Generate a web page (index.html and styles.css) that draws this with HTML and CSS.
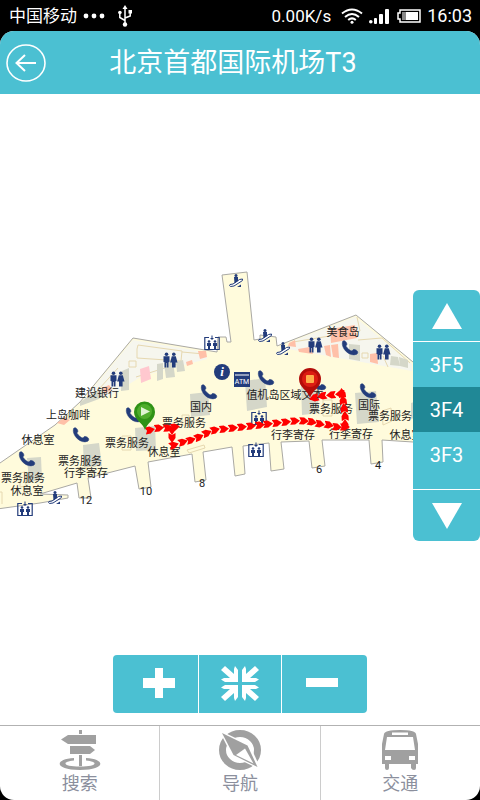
FILE: index.html
```html
<!DOCTYPE html>
<html lang="zh-CN">
<head>
  <meta charset="UTF-8">
  <meta name="viewport" content="width=device-width, initial-scale=1.0">
  <title>北京首都国际机场T3</title>
  <link rel="stylesheet" href="styles.css">
</head>
<body>
  <div class="status-bar">
    <span class="carrier">中国移动</span>
    <svg class="dots" width="22" height="6" viewBox="0 0 22 6" fill="#fff">
      <circle cx="3" cy="3" r="2.4"/><circle cx="11" cy="3" r="2.4"/><circle cx="19" cy="3" r="2.4"/>
    </svg>
    <svg class="usb" width="14" height="22" viewBox="0 0 14 22" fill="none" stroke="#fff" stroke-width="1.5">
      <path d="M7 19V3M7 15.500L1.800 12.500V8M7 13L12.200 11V7"/>
      <path d="M4.500 4L7 0L9.500 4Z" fill="#fff" stroke="none"/>
      <circle cx="7" cy="19.500" r="2.200" fill="#fff" stroke="none"/>
      <circle cx="1.900" cy="7.500" r="1.800" fill="#fff" stroke="none"/>
      <rect x="10.500" y="5" width="3.500" height="3.500" fill="#fff" stroke="none"/>
    </svg>
    <span class="speed">0.00K/s</span>
    <svg class="wifi" width="22" height="16" viewBox="0 0 22 16" fill="none" stroke="#fff" stroke-width="2">
      <path d="M1 5.500Q11-2.500 21 5.500M4 9Q11 3 18 9M7.200 12Q11 8.800 14.800 12"/>
      <circle cx="11" cy="14.300" r="1.500" fill="#fff" stroke="none"/>
    </svg>
    <svg class="signal" width="20" height="16" viewBox="0 0 20 16" fill="#fff">
      <circle cx="1.800" cy="13.800" r="1.800"/>
      <rect x="5" y="10" width="3" height="6" rx="1"/><rect x="10" y="6" width="4" height="10" rx="1"/><rect x="16" y="1" width="4" height="15" rx="1"/>
    </svg>
    <svg class="battery" width="24" height="14" viewBox="0 0 24 14">
      <path d="M3 1H23V13H3V10H1V4H3Z" fill="#000" stroke="#fff" stroke-width="1.500"/>
      <rect x="5" y="3" width="16" height="8" fill="#888"/>
      <rect x="9" y="3" width="12" height="8" fill="#fff"/>
    </svg>
    <span class="clock">16:03</span>
  </div>

  <div class="app">
    <header class="header">
      <button type="button" class="back" aria-label="返回">
        <svg width="40" height="38" viewBox="0 0 40 38" fill="none" stroke="#fff" stroke-width="1.600">
          <ellipse cx="20" cy="19" rx="19" ry="18"/>
          <path d="M30 19H10M19 11L10.500 19L19 27" stroke-width="2"/>
        </svg>
      </button>
      <h1>北京首都国际机场T3</h1>
    </header>

    <main class="map">
      <svg class="map-canvas" viewBox="0 94 480 631" preserveAspectRatio="xMidYMid slice">
        <defs>
          <g id="phone">
            <path d="M-7.500-6.500C-5.500-9-2.500-5-3.200-3.200L-4.200-2C-2.500 .500 0 2.800 2 3L3.300 1.500C6 1 9.500 4 6.800 6.200C0 9.500-9.500 .500-7.500-6.500Z" stroke="#233c7b" stroke-width=".5"/>
          </g>
          <g id="person">
            <circle cy="-5.700" r="1.800"/>
            <path d="M-3-3.700H3V2L2 2.300V7.500H.300V3H-.300V7.500H-2V2.300L-3 2Z"/>
          </g>
          <g id="woman">
            <circle cy="-5.700" r="1.800"/>
            <path d="M-2-3.700H2L3.700 2.500H1.800V7.500H-1.800V2.500H-3.700Z"/>
          </g>
          <g id="toilet">
            <use href="#person" x="-3.500"/>
            <use href="#woman" x="3.800"/>
          </g>
          <g id="lift">
            <path d="M-3-5.500H-7.200V6.500H7.200V-5.500H3" fill="none" stroke="#233c7b" stroke-width="1.200"/>
            <path d="M-.500-7.500H.500V-5H2L0-3L-2-5H-.500Z"/>
            <circle cx="-3" cy="-1.500" r="1.300"/><circle cx="3" cy="-1.500" r="1.300"/>
            <path d="M-5 0H-1V3H-2V6H-4V3H-5ZM1 0H5V3H4V6H2V3H1Z"/>
          </g>
          <g id="escalator">
            <path d="M-6 3.500L-3 3L3.500-1.500L6.500-2Q7 0 5 .500L-2 5L-5.500 5.500Q-7 5-6 3.500Z" fill="#fff" stroke="#233c7b"/>
            <circle cy="-5.500" r="1.500"/>
            <path d="M-2-4H2V0L-1.500 2.500ZM1 6L5 3.500V6Z"/>
          </g>
          <marker id="arrow" viewBox="-5 -4 10 8" markerWidth="10" markerHeight="8" markerUnits="userSpaceOnUse" orient="auto">
            <path d="M-5-3.500H0L5 0L0 3.500H-5L-3 0Z" fill="#f00"/>
          </marker>
        </defs>

        <!-- terminal floor -->
        <path class="floor" d="M-10 470L0 463L55 425L80 402L133 338L217 352L218 337L226 337L227 342L231 342L222 275L247 272L254 340L260 339V335L276 337L277 346L356 315L413 362L490 420V446L413 442L382 440L383 462L371 464L369 440L322 440L325 466L312 468L309 441L281 442L284 469L271 471L269 443L243 446L245 474L235 476L232 447L203 452L206 480L195 482L192 454L148 462L151 487L139 489L135 466L88 478L91 498L79 498L77 483L40 494L68 495V498L40 503L-10 510Z"/>

        <!-- shops -->
        <g class="block-light">
          <path d="M133 340L205 352L207 359L142 376L112 395L84 399Z"/>
          <path d="M355 317L412 364V371L288 349L293 341Z"/>
        </g>
        <g class="wall">
          <path d="M137 349L138 345L182 351L181 361L137 358ZM129 361H136V367H129ZM99 389L118 368M136 377L181 363M182 352L204 354"/>
          <path d="M293 342L360 331L357 317M358 340L382 338L410 363M362 353H368V358H362ZM383 356L388 367"/>
          <path d="M122 436H131V450H122ZM182 415H189V425H182ZM77 468L96 466M187 450L204 445L205 448L189 453ZM323 400H332V416H323ZM382 411L391 408L392 421L383 425ZM343 437L359 438M20 473L25 472L26 486L20 487ZM0 492L2 492V504"/>
        </g>
        <g class="block-grey">
          <path d="M122 371L129 368V390L121 391ZM157 364L163 363V379L157 381ZM164 363L173 361L175 377L166 378ZM176 362L183 360L185 371L177 372ZM80 402L98 390L104 392L99 399L80 406Z"/>
          <path d="M83 445L99 443L102 466L84 467ZM27 458L41 457L42 480L29 482ZM135 428L155 426L156 450L136 451ZM190 394L208 392L210 415L191 417ZM245 381L265 378L267 407L247 411ZM301 384L317 382L319 413L302 415ZM355 393L376 391L379 422L357 424ZM411 403L414 402V418L411 419Z"/>
          <path d="M349 344L360 345V361L349 359ZM391 356L398 357L400 366L390 365ZM399 357L408 360L408 368L400 366Z"/>
        </g>
        <path class="block-pink" d="M140 369L149 366L151 379L141 383Z"/>
        <g class="block-red">
          <path d="M186 362L192 360L193 364L187 366ZM198 351L206 351L207 357L200 359Z"/>
          <path d="M57 423L65 417L70 420L64 425ZM102 388L109 385L112 389L105 394Z"/>
          <path d="M289 343L295 340L296 347L288 346ZM298 349L310 347L313 354L299 352ZM324 346L330 345L331 357L326 355ZM331 345L338 344L339 358L333 357ZM330 329L355 325L357 338L331 343ZM370 354L377 353L378 364L370 362Z"/>
        </g>

        <!-- facilities -->
        <g class="facility">
          <use href="#phone" x="27" y="459"/>
          <use href="#phone" x="81" y="435"/>
          <use href="#phone" x="134" y="415"/>
          <use href="#phone" x="209" y="392"/>
          <use href="#phone" x="266" y="378"/>
          <use href="#phone" x="318" y="383"/>
          <use href="#phone" x="350" y="348"/>
          <use href="#phone" x="368" y="391"/>
          <use href="#toilet" x="117" y="379"/>
          <use href="#toilet" x="170" y="360"/>
          <use href="#toilet" x="315" y="345"/>
          <use href="#toilet" x="383" y="352"/>
          <use href="#lift" x="212" y="343"/>
          <use href="#lift" x="259" y="418"/>
          <use href="#lift" x="256" y="450"/>
          <use href="#lift" x="25" y="509"/>
          <use href="#escalator" x="236" y="281"/>
          <use href="#escalator" x="265" y="336"/>
          <use href="#escalator" x="283" y="349"/>
          <use href="#escalator" x="55" y="498"/>
          <circle cx="222" cy="372" r="8"/>
          <rect x="234" y="372" width="16" height="15"/>
        </g>
        <path d="M235 375H249" stroke="#fff"/>
        <text class="info" x="222" y="376">i</text>
        <text class="atm" x="242" y="384">ATM</text>

        <g class="labels">
          <text x="343" y="336">美食岛</text>
          <text x="97" y="397">建设银行</text>
          <text x="68" y="419">上岛咖啡</text>
          <text x="38" y="444">休息室</text>
          <text x="80" y="465">票务服务</text>
          <text x="86" y="477">行李寄存</text>
          <text x="23" y="482">票务服务</text>
          <text x="27" y="495">休息室</text>
          <text x="127" y="447">票务服务</text>
          <text x="184" y="427">票务服务</text>
          <text x="201" y="411">国内</text>
          <text x="164" y="456">休息室</text>
          <text x="285" y="399">值机岛区域文本</text>
          <text x="331" y="413">票务服务</text>
          <text x="369" y="409">国际</text>
          <text x="390" y="420">票务服务</text>
          <text x="293" y="439">行李寄存</text>
          <text x="351" y="438">行李寄存</text>
          <text x="406" y="439">休息室</text>
          <text x="86" y="504">12</text>
          <text x="146" y="495">10</text>
          <text x="202" y="487">8</text>
          <text x="319" y="473">6</text>
          <text x="378" y="469">4</text>
        </g>

        <!-- route -->
        <g class="route">
          <polyline points="150,430 159,428 168,428 175,427"/>
          <polyline points="172,430 172,438"/>
          <polyline points="174,445 183,442 191,440 199,437 207,433 215,430 224,429 233,428 242,427 251,426 260,425 268,424 277,423 286,422 295,421 304,421 312,422 320,424 329,425 337,427 345,427"/>
          <polyline points="345,424 345,416 344,408 343,400 342,393"/>
          <polyline points="340,394 331,395 322,396 314,398"/>
        </g>

        <path d="M145 430C143 423 134 420 134 412A10.500 10.500 0 0 1 155 412C155 420 147 423 145 430Z" fill="#2f9216"/>
        <circle cx="144.500" cy="411.500" r="7.500" fill="#4fad2c"/>
        <path d="M141 407V416L150 411.500Z" fill="#dff3d2"/>
        <path d="M310 398C308 390 299 388 299 379A11 11 0 0 1 321 379C321 388 312 390 310 398Z" fill="#b30d09"/>
        <circle cx="310" cy="379" r="8" fill="#dc1d12"/>
        <rect x="306" y="375" width="8" height="8" rx="1" fill="#ffad4b"/>
      </svg>

      <div class="floors">
        <button type="button" class="floor-arrow" aria-label="上一层">
          <svg width="30" height="26" viewBox="0 0 30 26"><path d="M15 0L30 26H0Z" fill="#fff"/></svg>
        </button>
        <div class="floor-list">
          <button type="button" class="floor-item">3F5</button>
          <button type="button" class="floor-item active">3F4</button>
          <button type="button" class="floor-item">3F3</button>
        </div>
        <button type="button" class="floor-arrow" aria-label="下一层">
          <svg width="30" height="26" viewBox="0 0 30 26"><path d="M15 26L30 0H0Z" fill="#fff"/></svg>
        </button>
      </div>

      <div class="zoom">
        <button type="button" class="zoom-in" aria-label="放大">
          <svg width="32" height="30" viewBox="0 0 32 30"><path d="M12 0H20V10H32V20H20V30H12V20H0V10H12Z" fill="#fff"/></svg>
        </button>
        <button type="button" class="zoom-fit" aria-label="复位">
          <svg width="38" height="35" viewBox="0 0 38 35" fill="#fff">
            <path id="corner" d="M0 4L4 0L13 8V3L14 0L17 4V16H4L0 13.500L3 12H9Z"/>
            <use href="#corner" transform="matrix(-1 0 0 1 38 0)"/>
            <use href="#corner" transform="matrix(1 0 0 -1 0 35)"/>
            <use href="#corner" transform="matrix(-1 0 0 -1 38 35)"/>
          </svg>
        </button>
        <button type="button" class="zoom-out" aria-label="缩小">
          <svg width="32" height="30" viewBox="0 0 32 30"><path d="M0 10H32V19H0Z" fill="#fff"/></svg>
        </button>
      </div>
    </main>

    <nav class="tabs">
      <a href="#search" class="tab">
        <svg width="42" height="40" viewBox="0 0 42 40" fill="#a0a0a0">
          <path d="M20 0H23V4H20ZM9 5H37V14H9L2 9.500ZM11 16H31L36 20L31 24H11ZM20 25H23V36H20Z"/>
          <path d="M15 28C-5 29-5 40 21 40S47 29 27 28V30.500C41 32 37 36.500 21 36.500S1 32 15 30.500Z"/>
        </svg>
        <span>搜索</span>
      </a>
      <a href="#navigate" class="tab">
        <svg width="42" height="40" viewBox="0 0 42 40">
          <ellipse cx="21" cy="20" rx="17.500" ry="16.500" fill="none" stroke="#a0a0a0" stroke-width="7"/>
          <path d="M0 0L31 15L42 40L13 26Z" fill="#fff"/>
          <path d="M3 3L28.500 15.500L38.500 37L14.500 25Z" fill="#a0a0a0"/>
          <path d="M26 18.500L34.500 33.500L17 25Z" fill="#fff"/>
        </svg>
        <span>导航</span>
      </a>
      <a href="#traffic" class="tab">
        <svg width="42" height="40" viewBox="0 0 42 40">
          <path d="M3 34V14L5 4Q6 0 21 0T37 4L39 14V34H37V38Q37 40 35 40T32 38V34H10V38Q10 40 8 40T6 38V34Z" fill="#a0a0a0"/>
          <path d="M8 7H34L36 20H6ZM13 2.500H29V5H13ZM6 26H12V30H6ZM30 26H36V30H30Z" fill="#fff"/>
        </svg>
        <span>交通</span>
      </a>
    </nav>
  </div>
</body>
</html>
```

FILE: styles.css
```css
* {
  box-sizing: border-box;
}

body {
  display: flex;
  flex-direction: column;
  height: 100vh;
  margin: 0;
  background: #000;
  font-family: Roboto, "Noto Sans CJK SC", sans-serif;
}

button {
  display: flex;
  align-items: center;
  justify-content: center;
  padding: 0;
  border: none;
  background: none;
  color: inherit;
  font: inherit;
  cursor: pointer;
}

svg {
  display: block;
}

.status-bar {
  display: flex;
  align-items: center;
  height: 31px;
  padding: 1px 8px 0 9px;
  color: #fff;
  font-size: 17px;
  line-height: 30px;
}

.dots {
  margin-left: 6px;
}

.usb {
  margin-left: 13px;
}

.speed {
  margin-left: auto;
}

.wifi {
  margin-left: 10px;
}

.signal {
  margin-left: 6px;
}

.battery {
  margin: 0 6px 0 8px;
}

.clock {
  font-size: 18px;
}

.app {
  flex: 1;
  display: flex;
  flex-direction: column;
  min-height: 0;
  background: #fff;
  border-radius: 14px;
  overflow: hidden;
}

.header {
  display: flex;
  align-items: center;
  height: 63px;
  padding: 0 60px 0 6px;
  background: #4bc0d2;
  color: #fff;
}

.header h1 {
  flex: 1;
  margin: 0;
  font-size: 27px;
  font-weight: 400;
  line-height: 36px;
  text-align: center;
}

.map {
  position: relative;
  flex: 1;
  min-height: 0;
}

.map-canvas {
  width: 100%;
  height: 100%;
}

.floor {
  fill: #fffbdc;
  stroke: #aaa9a4;
  stroke-width: 1;
}

.block-light {
  fill: #f6f6ee;
}

.block-grey {
  fill: #d5d7c9;
}

.block-red {
  fill: #ffc0a8;
}

.block-pink {
  fill: #ffc8cf;
}

.wall {
  fill: none;
  stroke: #e6d8b0;
  stroke-width: 1;
}

.facility {
  fill: #233c7b;
}

.labels {
  fill: #222;
  font-size: 11px;
  text-anchor: middle;
}

.info {
  fill: #fff;
  font: italic bold 13px "Liberation Serif", serif;
  text-anchor: middle;
}

.atm {
  fill: #fff;
  font-size: 7px;
  text-anchor: middle;
}

.route polyline {
  fill: none;
  marker-start: url(#arrow);
  marker-mid: url(#arrow);
  marker-end: url(#arrow);
}

.floors {
  position: absolute;
  top: 196px;
  right: 0;
  width: 67px;
  background: #4bc0d2;
  border-radius: 6px;
  color: #fff;
  font-size: 20px;
  overflow: hidden;
}

.floor-arrow {
  width: 100%;
  height: 51px;
}

.floor-list {
  padding-bottom: 12px;
  border-top: 1px solid #fff;
  border-bottom: 1px solid #fff;
}

.floor-item {
  width: 100%;
  height: 45px;
}

.floor-item.active {
  background: #208896;
}

.zoom {
  position: absolute;
  right: 0;
  bottom: 12px;
  left: 0;
  display: flex;
  gap: 1px;
  width: max-content;
  margin: 0 auto;
  border-radius: 4px;
  overflow: hidden;
}

.zoom button {
  width: 85px;
  height: 58px;
  padding-bottom: 2px;
  background: #4bc0d2;
}

.zoom .zoom-in {
  padding-left: 6px;
}

.zoom .zoom-fit {
  width: 82px;
}

.zoom .zoom-out {
  padding-right: 6px;
}

.tabs {
  display: flex;
  height: 75px;
  border-top: 1px solid #b2b2b2;
}

.tab {
  flex: 1;
  display: flex;
  flex-direction: column;
  align-items: center;
  padding-top: 4px;
  color: #8b8f9d;
  font-size: 18px;
  line-height: 28px;
  text-decoration: none;
}

.tab + .tab {
  border-left: 1px solid #ccc;
}
```
